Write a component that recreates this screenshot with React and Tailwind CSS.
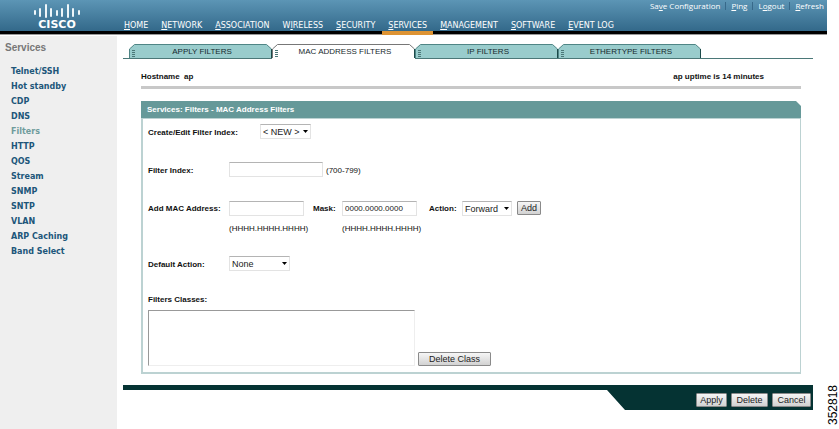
import { useState } from "react";

const navItems = [
  { key: "H", before: "", after: "OME" },
  { key: "N", before: "", after: "ETWORK" },
  { key: "A", before: "", after: "SSOCIATION" },
  { key: "I", before: "W", after: "RELESS" },
  { key: "S", before: "", after: "ECURITY" },
  { key: "S", before: "", after: "ERVICES", active: true },
  { key: "M", before: "", after: "ANAGEMENT" },
  { key: "S", before: "", after: "OFTWARE" },
  { key: "E", before: "", after: "VENT LOG" },
];

const utilityLinks = [
  { key: "v", before: "Sa", after: "e Configuration" },
  { key: "P", before: "", after: "ing" },
  { key: "o", before: "L", after: "gout" },
  { key: "R", before: "", after: "efresh" },
];

const sideItems = [
  "Telnet/SSH",
  "Hot standby",
  "CDP",
  "DNS",
  "Filters",
  "HTTP",
  "QOS",
  "Stream",
  "SNMP",
  "SNTP",
  "VLAN",
  "ARP Caching",
  "Band Select",
];

const tabs = ["APPLY FILTERS", "MAC ADDRESS FILTERS", "IP FILTERS", "ETHERTYPE FILTERS"];

const logoBars = [
  [1, 7, 10],
  [6, 5, 12],
  [12, 1, 13],
  [17, 5, 12],
  [23, 7, 11],
  [28, 5, 12],
  [34, 1, 13],
  [39, 5, 12],
  [45, 7, 10],
];

const inputClass =
  "h-[15px] border border-[#e3e3e3] border-t-[#b4b4b4] bg-white px-[2px] text-[8px] text-[#222] outline-none";

function AccessKeyText({ item }) {
  return (
    <>
      {item.before}
      <span className="underline">{item.key}</span>
      {item.after}
    </>
  );
}

function Logo() {
  return (
    <div className="flex w-[46px] flex-col items-center">
      <svg viewBox="0 0 46 14" className="h-[14px] w-[46px]" stroke="#eef6fa" strokeWidth="2" strokeLinecap="round">
        {logoBars.map(([x, y1, y2]) => (
          <line key={x} x1={x} x2={x} y1={y1} y2={y2} />
        ))}
      </svg>
      <span className="mt-px font-['DejaVu_Sans',sans-serif] text-[11px] leading-[11px] font-bold text-white">
        CISCO
      </span>
    </div>
  );
}

function Header() {
  return (
    <header className="flex h-[35px] shrink-0 items-stretch bg-[linear-gradient(#5c95b5_0px,#33698a_31px,#000_31px,#000_34px,#999_34px)] pl-[34px] font-['DejaVu_Sans',sans-serif] text-[8px] text-white">
      <div className="w-[89px] shrink-0 pt-[4px]">
        <Logo />
      </div>
      <div className="flex flex-1 flex-col justify-between">
        <div className="flex justify-end pt-px pr-[3px] font-['Open_Sans',sans-serif] leading-[10px]">
          {utilityLinks.map((item, i) => (
            <div key={item.after} className="flex">
              {i > 0 && <span className="mx-[5px] mt-px h-[8px] w-px bg-[#37698a]" />}
              <a href="#" className="whitespace-nowrap">
                <AccessKeyText item={item} />
              </a>
            </div>
          ))}
        </div>
        <nav className="-ml-[5px] flex gap-px">
          {navItems.map((item) => (
            <a
              key={item.after}
              href="#"
              className={`flex h-[15px] items-start border-b-4 px-[6px] leading-[11px] whitespace-nowrap ${
                item.active ? "border-[#dd9333]" : "border-transparent"
              }`}
            >
              <span>
                <AccessKeyText item={item} />
              </span>
            </a>
          ))}
        </nav>
      </div>
    </header>
  );
}

function Sidebar() {
  return (
    <aside className="w-[117px] shrink-0 bg-[#efefef] pt-[6px]">
      <h2 className="pl-[5px] text-[10px] leading-[12px] font-bold text-[#777]">Services</h2>
      <ul className="mt-[10px] pl-[11px] font-['DejaVu_Sans',sans-serif] text-[8px] leading-[15px] font-bold">
        {sideItems.map((name) => (
          <li key={name}>
            <a href="#" className={name === "Filters" ? "text-[#6f9c9c]" : "text-[#20567a]"}>
              {name}
            </a>
          </li>
        ))}
      </ul>
    </aside>
  );
}

function Tab({ label, active, onSelect }) {
  return (
    <button
      type="button"
      role="tab"
      aria-selected={active}
      onClick={onSelect}
      className={`grid h-[15px] w-[143px] shrink grid-cols-1 border-b text-[8px] text-[#17292c] ${
        active ? "border-white" : "border-[#4b7878]"
      }`}
    >
      <svg viewBox="0 0 143 14" preserveAspectRatio="none" className="col-start-1 row-start-1 h-[14px] w-full">
        <path
          d="M.5 14V5L5.500 .5H137.500L142.500 5V14"
          fill={active ? "#fff" : "#99cccc"}
          stroke={active ? "#777" : "#4f8585"}
        />
        <path d="M142.500 5V14" stroke="#1c4a4a" />
        <path d="M3 6.500H6M3 8.500H6M3 10.500H6M3 12.500H6" stroke="#4b7878" />
      </svg>
      <span className="col-start-1 row-start-1 pt-[2px] pl-[3px] leading-[12px]">{label}</span>
    </button>
  );
}

function SelectBox({ id, className, options }) {
  return (
    <div className={`relative ${className}`}>
      <select
        id={id}
        className="block h-[15px] w-full appearance-none border border-[#e3e3e3] border-t-[#b4b4b4] bg-white pl-[2px] text-[9px] leading-[12px] text-[#222] outline-none"
      >
        {options.map((o) => (
          <option key={o}>{o}</option>
        ))}
      </select>
      <svg viewBox="0 0 5 3" className="pointer-events-none absolute top-[6px] right-[3px] h-[3px] w-[5px]">
        <path d="M0 0H5L2.500 3Z" fill="#000" />
      </svg>
    </div>
  );
}

function Button({ children, className = "" }) {
  return (
    <button
      type="button"
      className={`h-[14px] rounded-[1px] border border-[#8a8a8a] bg-linear-to-b from-[#f6f6f6] to-[#d2d2d2] text-[9px] leading-[12px] whitespace-nowrap text-[#222] ${className}`}
    >
      {children}
    </button>
  );
}

function FilterForm() {
  return (
    <section className="mt-[12px] mr-[12px] ml-[18px]">
      <h1 className="h-[17px] bg-[#669999] pl-[6px] text-[8px] leading-[18px] font-bold text-white [clip-path:polygon(0_0,calc(100%-5px)_0,100%_5px,100%_100%,0_100%)]">
        Services: Filters - MAC Address Filters
      </h1>
      <form className="border border-b-2 border-l-2 border-[#bcd2d2] pr-[6px] pb-[6px] pl-[5px] text-[8px]">
        <div className="flex items-center pt-[5px]">
          <label htmlFor="index-select" className="w-[112px] pt-[2px] font-bold">
            Create/Edit Filter Index:
          </label>
          <SelectBox id="index-select" className="w-[51px]" options={["< NEW >"]} />
        </div>

        <div className="mt-[23px] flex items-center">
          <label htmlFor="filter-index" className="w-[81px] pt-[2px] font-bold">
            Filter Index:
          </label>
          <input id="filter-index" type="text" className={`w-[94px] ${inputClass}`} />
          <span className="ml-[3px] pt-[2px]">(700-799)</span>
        </div>

        <div className="mt-[24px] flex items-start leading-[15px]">
          <label htmlFor="mac" className="w-[81px] font-bold">
            Add MAC Address:
          </label>
          <div className="w-[84px]">
            <input id="mac" type="text" className={`block w-[75px] ${inputClass}`} />
            <div className="mt-[5px]">(HHHH.HHHH.HHHH)</div>
          </div>
          <label htmlFor="mask" className="w-[29px] font-bold">
            Mask:
          </label>
          <div className="w-[87px]">
            <input id="mask" type="text" defaultValue="0000.0000.0000" className={`block w-[75px] ${inputClass}`} />
            <div className="mt-[5px]">(HHHH.HHHH.HHHH)</div>
          </div>
          <label htmlFor="action" className="w-[33px] font-bold">
            Action:
          </label>
          <SelectBox id="action" className="w-[50px]" options={["Forward", "Block"]} />
          <Button className="ml-[5px] w-[24px]">Add</Button>
        </div>

        <div className="mt-[20px] flex items-center">
          <label htmlFor="default-action" className="w-[81px] pt-[2px] font-bold">
            Default Action:
          </label>
          <SelectBox id="default-action" className="w-[61px]" options={["None", "Forward All", "Block All"]} />
        </div>

        <label htmlFor="classes" className="mt-[23px] block leading-[12px] font-bold">
          Filters Classes:
        </label>
        <div className="mt-[4px] flex items-end gap-[3px]">
          <select
            id="classes"
            size={4}
            className="h-[56px] w-[267px] border border-[#eee] border-t-[#999] border-l-[#999] bg-white outline-none"
          />
          <Button className="w-[73px]">Delete Class</Button>
        </div>
      </form>
    </section>
  );
}

function Footer() {
  return (
    <footer className="mt-[11px] flex h-[25px] items-end justify-end gap-[4px] bg-[#053333] pr-[2px] pb-[3px] [clip-path:polygon(0_0,100%_0,100%_100%,calc(100%-188px)_100%,calc(100%-206px)_5px,0_5px)]">
      <Button className="w-[31px]">Apply</Button>
      <Button className="w-[37px]">Delete</Button>
      <Button className="w-[39px]">Cancel</Button>
    </footer>
  );
}

export default function App() {
  const [activeTab, setActiveTab] = useState("MAC ADDRESS FILTERS");

  return (
    <div className="flex min-h-screen bg-white font-['Liberation_Sans',Arial,sans-serif] text-[#111]">
      <div className="flex min-w-0 flex-1 flex-col">
        <Header />
        <div className="mt-px flex flex-1">
          <Sidebar />
          <main className="min-w-0 flex-1 pt-[8px] pr-[14px] pl-[6px]">
            <div className="flex" role="tablist">
              <span className="w-[6px] border-b border-[#4b7878]" />
              {tabs.map((label) => (
                <Tab key={label} label={label} active={label === activeTab} onSelect={() => setActiveTab(label)} />
              ))}
              <span className="flex-1 border-b border-[#4b7878]" />
            </div>
            <div className="mt-[12px] mr-[12px] ml-[18px] flex justify-between border-b-3 border-[#c8c8c8] pr-[37px] pb-[3px] text-[8px] leading-[12px] font-bold">
              <span>Hostname&nbsp; ap</span>
              <span>ap uptime is 14 minutes</span>
            </div>
            <FilterForm />
            <Footer />
          </main>
        </div>
      </div>
      <div className="flex w-[12px] items-end pb-[4px]">
        <span className="rotate-180 text-[12px] leading-[12px] text-black [writing-mode:vertical-rl]">352818</span>
      </div>
    </div>
  );
}
